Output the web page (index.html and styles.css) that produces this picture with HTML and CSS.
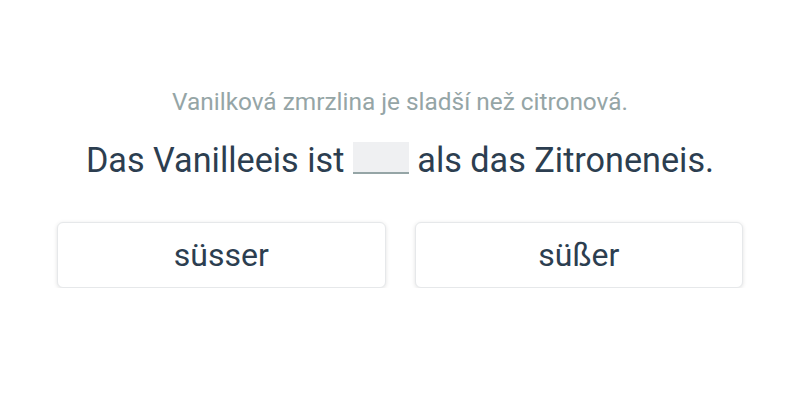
FILE: index.html
```html
<!DOCTYPE html>
<html lang="cs">
<head>
    <meta charset="UTF-8">
    <meta name="viewport" content="width=device-width, initial-scale=1.0">
    <title>Cvičení</title>
    <link rel="stylesheet" href="styles.css">
</head>
<body>
    <div class="exercise">
        <p class="hint">Vanilková zmrzlina je sladší než citronová.</p>
        <p class="sentence">Das Vanilleeis ist <span class="blank"></span> als das Zitroneneis.</p>
        <div class="choices">
            <button class="choice">süsser</button>
            <button class="choice">süßer</button>
        </div>
    </div>
</body>
</html>
```

FILE: styles.css
```css
body {
    font-family: Roboto, 'Noto Sans', sans-serif;
    background-color: #fff;
    color: #2c3e50;
    margin: 0;
}

.exercise {
    width: 686px;
    margin: 0 auto;
    padding-top: 88px;
    text-align: center;
}

.hint {
    margin: 0;
    font-size: 24.4px;
    line-height: 28px;
    color: #95a5a6;
}

.sentence {
    margin: 24px 0 0;
    font-size: 34.2px;
    line-height: 40px;
    color: #2c3e50;
}

.blank {
    display: inline-block;
    width: 56px;
    height: 30px;
    background-color: #eff0f2;
    border-bottom: 2px solid #95a5a6;
    vertical-align: -2px;
}

.choices {
    display: flex;
    gap: 29px;
    margin-top: 42px;
}

.choice {
    flex: 1;
    height: 66px;
    background-color: #fff;
    border: 1px solid #e6e8ea;
    border-radius: 6px;
    box-shadow: 0 1px 4px rgba(0, 0, 0, 0.12);
    font-family: inherit;
    font-size: 32px;
    color: #2c3e50;
    cursor: pointer;
}
```
